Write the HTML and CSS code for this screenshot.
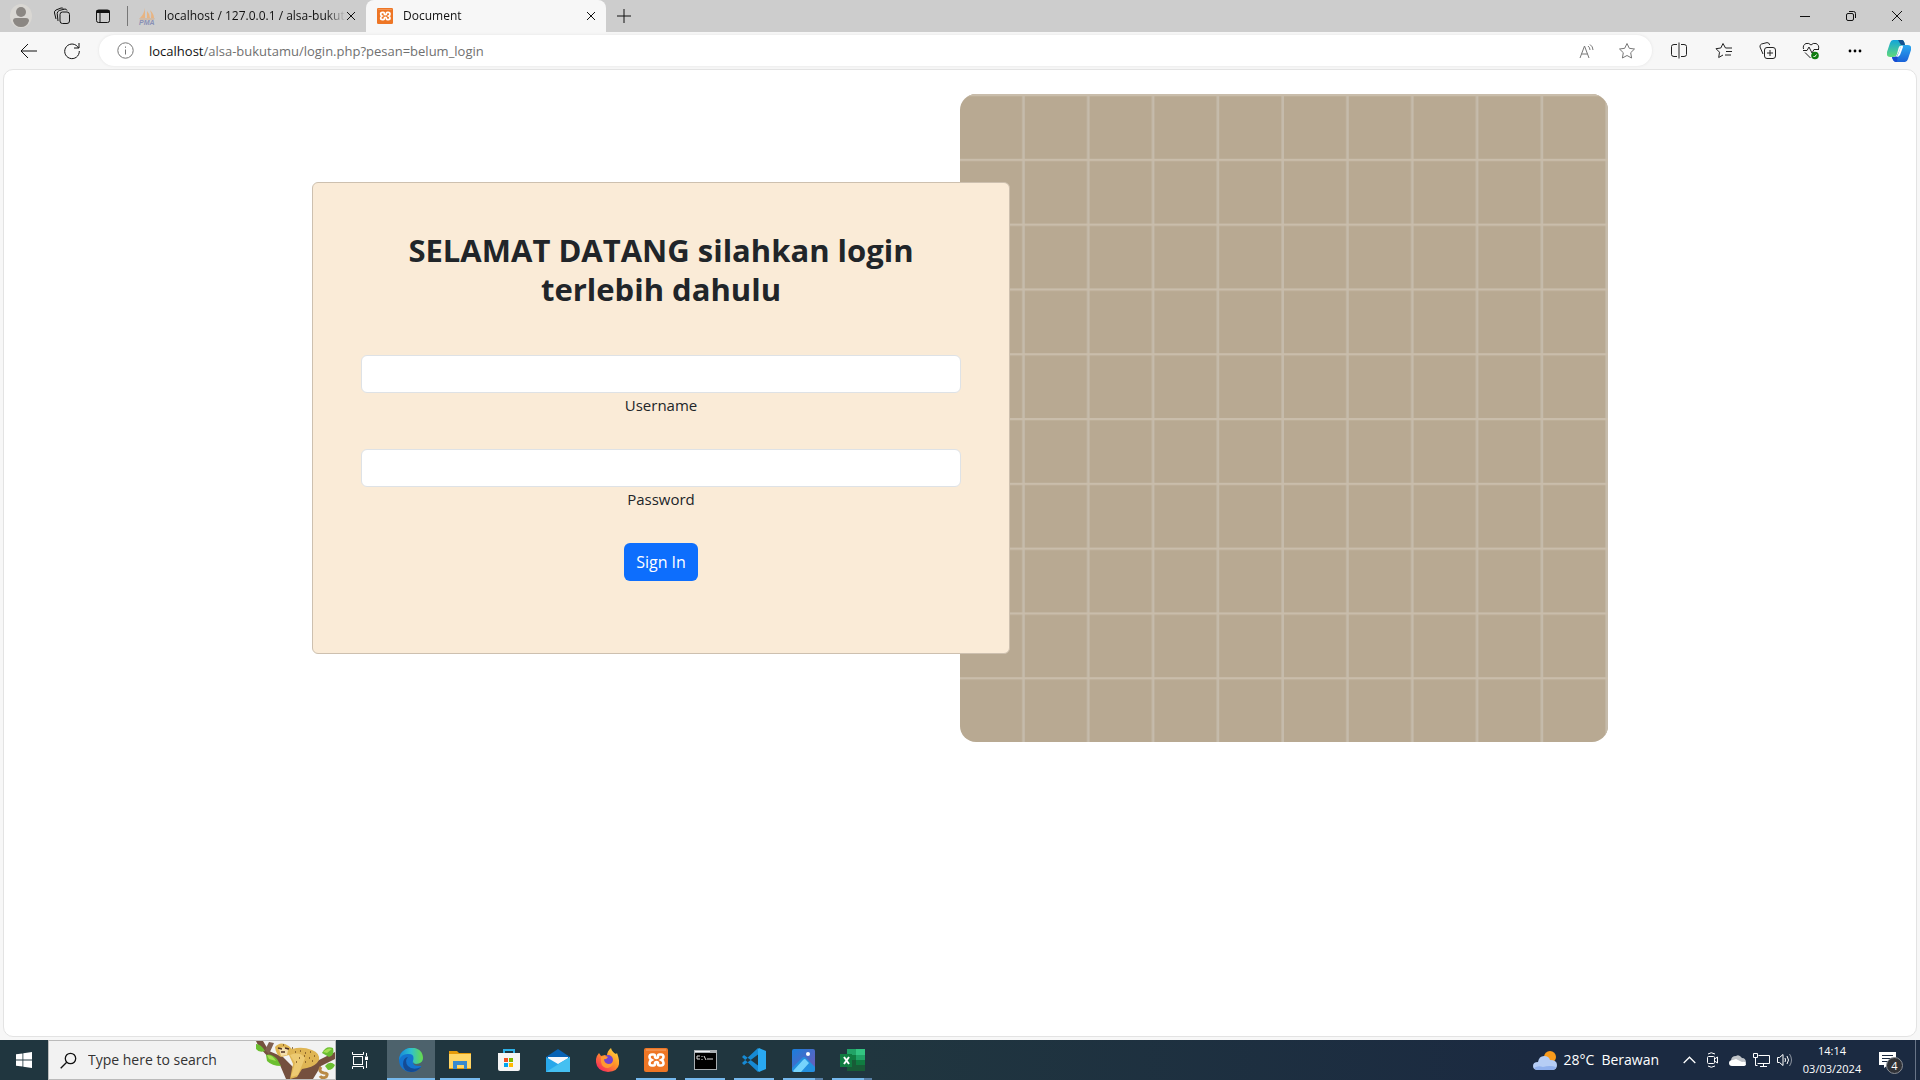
FILE: index.html
```html
<!DOCTYPE html>
<html lang="id">
<head>
<meta charset="utf-8">
<meta name="viewport" content="width=device-width, initial-scale=1">
<title>Document</title>
<link rel="stylesheet" href="styles.css">
</head>
<body>
<header class="browser">
  <div class="tabstrip">
    <div class="tab-tools">
      <button class="icon-btn" aria-label="Profile"><svg width="22" height="26" viewBox="0 0 22 26"><ellipse cx="11" cy="13" rx="11" ry="12" fill="#d9d7d3"/><circle cx="11" cy="9" r="5" fill="#8b8783"/><path d="M3 18q0-3 3-3h10q3 0 3 3-2 6-8 6t-8-6z" fill="#8b8783"/></svg></button>
      <button class="icon-btn" aria-label="Workspaces"><svg width="18" height="18" viewBox="0 0 18 18" class="line"><rect x="7" y="5" width="9.500" height="11.500" rx="2.500"/><path d="M5 14l-.8-7.500q0-2 2-3L12 2q1.500 0 2 1.500M3 12L1.500 6q-.5-2 1.500-3L8 1q1.500-.3 2.500.8"/></svg></button>
      <button class="icon-btn" aria-label="Tab actions"><svg width="16" height="16" viewBox="0 0 16 16" class="line"><rect x="1.500" y="2" width="13" height="12.500" rx="2"/><path d="M1.500 3.500h13" stroke-width="3"/><path d="M5 4v10"/></svg></button>
    </div>
    <div class="tab">
      <svg width="18" height="18" viewBox="0 0 18 18"><path d="M7 1v10H2Q6 7 7 1zM9 4q3 3 3 7H9zM12 3q4 4 4 8h-3q1-4-1-8z" fill="#e8b482"/><path d="M1 11.500h16l-1 1H2z" fill="#d6a982"/><text x="1" y="18" class="pma">PMA</text></svg>
      <span class="tab-title">localhost / 127.0.0.1 / alsa-bukut</span>
      <button class="close" aria-label="Close tab"><svg width="10" height="10" viewBox="0 0 10 10" class="line"><path d="M1 1l8 8M9 1L1 9"/></svg></button>
    </div>
    <div class="tab tab-active">
      <svg width="16" height="16" viewBox="0 0 24 24"><use href="#xampp"/></svg>
      <span class="tab-title">Document</span>
      <button class="close" aria-label="Close tab"><svg width="10" height="10" viewBox="0 0 10 10" class="line"><path d="M1 1l8 8M9 1L1 9"/></svg></button>
    </div>
    <button class="icon-btn new-tab" aria-label="New tab"><svg width="14" height="14" viewBox="0 0 14 14" class="line"><path d="M7 0v14M0 7h14"/></svg></button>
    <div class="window-controls">
      <button class="icon-btn" aria-label="Minimize"><svg width="10" height="10" viewBox="0 0 10 10" class="line"><path d="M0 5.500h10"/></svg></button>
      <button class="icon-btn" aria-label="Restore"><svg width="10" height="10" viewBox="0 0 10 10" class="line"><rect x=".5" y="2.500" width="7" height="7" rx="1.500"/><path d="M3 .5h4.500q2 0 2 2V7"/></svg></button>
      <button class="icon-btn" aria-label="Close"><svg width="12" height="12" viewBox="0 0 12 12" class="line"><path d="M1 1l10 10M11 1L1 11"/></svg></button>
    </div>
  </div>
  <div class="toolbar">
    <div class="nav">
      <button class="icon-btn" aria-label="Back"><svg width="17" height="16" viewBox="0 0 17 16" class="line"><path d="M8 1L1 8l7 7M1 8h16"/></svg></button>
      <button class="icon-btn" aria-label="Refresh"><svg width="18" height="18" viewBox="0 0 18 18" class="line"><path d="M15.500 6A7.300 7.300 0 1 0 16.300 9M16 1v5h-5"/></svg></button>
    </div>
    <div class="address">
      <button class="site-info" aria-label="Site information"><svg width="17" height="17" viewBox="0 0 17 17" class="line gray"><circle cx="8.500" cy="8.500" r="7.700"/><path d="M8.500 7.500v5M8.500 4.500v1.300"/></svg></button>
      <a class="url" href="#"><span class="host">localhost</span>/alsa-bukutamu/login.php?pesan=belum_login</a>
      <button class="icon-btn" aria-label="Read aloud"><svg width="17" height="16" viewBox="0 0 17 16" class="line gray"><path d="M1 15L5.500 3 10 15M2.500 11h6M9 3q2 1.500 2 4M11 1.500q3 2 3 5.500"/></svg></button>
      <button class="icon-btn" aria-label="Add to favorites"><svg width="18" height="18" viewBox="0 0 18 18" class="line gray"><path d="M9 1.500l2.300 4.800 5.200.7-3.800 3.700.9 5.300L9 13.500 4.400 16l.9-5.300L1.500 7l5.200-.7z"/></svg></button>
    </div>
    <div class="tools">
      <button class="icon-btn" aria-label="Split screen"><svg width="16" height="17" viewBox="0 0 16 17" class="line dark"><path d="M6 2.500H3q-2.500 0-2.500 2v8q0 2 2.500 2h3M10 2.500h3q2.500 0 2.500 2v8q0 2-2.500 2h-3M8 .5v16"/></svg></button>
      <button class="icon-btn" aria-label="Favorites"><svg width="17" height="17" viewBox="0 0 17 17" class="line dark"><path d="M10.500 6L8 1.500 5.800 6 1 6.700l3.500 3.500-.8 5.300L8 13M10.500 6H17M11 9.500h6M10 13h6"/></svg></button>
      <button class="icon-btn" aria-label="Collections"><svg width="17" height="17" viewBox="0 0 17 17" class="line dark"><rect x="5.500" y="5.500" width="11" height="11" rx="2.500"/><path d="M11 8v6M8 11h6M4 12L1 5q-.5-2 1.500-3L8 .6q2-.3 2.700 2.400"/></svg></button>
      <button class="icon-btn" aria-label="Browser essentials"><svg width="18" height="18" viewBox="0 0 18 18" class="line dark"><path d="M1.500 7Q.5 3 4 1.500q3-.8 5 1.500 2-2.300 5-1.500Q17.500 3 16.500 7M3 10.500L8.500 16M1 8.500h4L7 5l3 6 2-3.500h5"/><circle cx="13" cy="13.500" r="3.800" fill="#107c10" stroke="none"/><path d="M11.500 14l1 1 2-2.500" stroke="#fff"/></svg></button>
      <button class="icon-btn" aria-label="Settings and more"><svg width="14" height="4" viewBox="0 0 14 4"><circle cx="2" cy="2" r="1.400"/><circle cx="7" cy="2" r="1.400"/><circle cx="12" cy="2" r="1.400"/></svg></button>
      <button class="icon-btn copilot" aria-label="Copilot"><svg width="24" height="22" viewBox="0 0 24 22"><defs><linearGradient id="cp1" x2="0" y2="1"><stop stop-color="#12a5da"/><stop offset="1" stop-color="#61d97a"/></linearGradient><linearGradient id="cp2" x2="0" y2="1"><stop stop-color="#2aa9f0"/><stop offset="1" stop-color="#1a62d8"/></linearGradient></defs><path d="M6 0h9q2 0 3 5l-5 1q-1 0-2 4l-1 4q-1 3-4 3H3q-4 0-3-5L3 3q1-3 3-3z" fill="url(#cp1)"/><path d="M11 0h4q2 0 3 5h-4z" fill="#14518f"/><path d="M18 22H9q-3 0-4-5h2q3 0 4-3l2-5q1-4 4-4h4q4 0 3 5l-3 9q-1 3-3 3z" fill="url(#cp2)"/><path d="M5 17h2q3 0 4-3l-1 8q-4 0-5-5z" fill="#1849d2"/><path d="M14 6q2-1 2 1l-3 8q-1 2-4 2 2-1 3-5z" fill="#fff"/></svg></button>
    </div>
  </div>
</header>

<main class="viewport">
  <section class="login">
    <div class="card">
      <h2 class="heading">SELAMAT DATANG silahkan login terlebih dahulu</h2>
      <form class="form">
        <div class="field">
          <input class="control" type="text" id="username" name="username">
          <label for="username">Username</label>
        </div>
        <div class="field">
          <input class="control" type="password" id="password" name="password">
          <label for="password">Password</label>
        </div>
        <button class="submit" type="submit">Sign In</button>
      </form>
    </div>
    <svg class="tiles" viewBox="0 0 648 648" aria-hidden="true">
      <defs><pattern id="grid" width="64.800" height="64.800" patternUnits="userSpaceOnUse"><path d="M63.700 0v65" stroke="#c5bbab" stroke-width="3"/><path d="M0 1h65" stroke="#c9bdab" stroke-width="2.400"/></pattern></defs>
      <rect width="648" height="648" fill="#b8a992"/><rect width="648" height="648" fill="url(#grid)"/>
    </svg>
  </section>
</main>

<footer class="taskbar">
  <button class="start" aria-label="Start"><svg width="16" height="16" viewBox="0 0 16 16" fill="#fff"><path d="M0 2.300L6.500 1.400v6.200H0zM7.300 1.300L16 0v7.600H7.300zM0 8.400h6.500v6.200L0 13.700zM7.300 8.400H16V16l-8.700-1.300z"/></svg></button>
  <div class="search">
    <svg width="17" height="17" viewBox="0 0 17 17" class="line"><circle cx="10.500" cy="6.500" r="5.200" stroke-width="1.300"/><path d="M6.700 10.300L.7 16.300" stroke-width="1.300"/></svg>
    <input class="search-input" type="search" placeholder="Type here to search" aria-label="Type here to search">
    <svg class="leopard" width="79" height="38" viewBox="0 0 79 38">
      <path d="M0 0h7l6 10 14 6 14 14 8-6 12-4 18-9v7L65 25l-8 13H30l-6-14-10-6L3 6z" fill="#75503e"/>
      <path d="M13 1L9 9l4 4 5-11z" fill="#806050"/>
      <path d="M19 6q4-5 10-3 5 2 7 5 10-3 20 1 8 3 7 10-3 6-12 8l-5 1-5 8-7 2 3-15-4-9-8 2q-5-2-6-10z" fill="#dfb554"/>
      <path d="M34 14q10-4 15 3l-7 17-7 2 4-14z" fill="#edca72"/>
      <path d="M23 8q5-4 9 1l-1 5-6 1z" fill="#f4dfad"/><path d="M22 7l4 1M29 7l4 1M25 11h4" stroke="#4d3024" stroke-width="1.500"/>
      <path d="M39 11h1M44 10h1M49 12h1M54 11h1M58 15h1M53 17h1M48 15h1M43 17h1M40 21h1M49 21h1M56 20h1M36 7h1M27 4h1" stroke="#785220" stroke-width="1.500"/>
      <path d="M65 26q-3 5 3 6 5 0 2 4-4 2-6-1" fill="none" stroke="#b98946" stroke-width="3"/>
      <path d="M0 3q5 0 9 7-6 2-9-2zM10 14q5-2 11 4l4 7q-9 0-14-5zM66 12q4-8 11-5 2 7-4 9zM69 25q5-6 10-1-2 5-7 5z" fill="#6cbf31"/>
      <path d="M11 14q6 0 9 6l-7-2zM67 11q5-5 9-3l-5 4z" fill="#a7df55"/>
    </svg>
  </div>
  <button class="task-view" aria-label="Task view"><svg width="17" height="17" viewBox="0 0 17 17" class="line white"><rect x="1.500" y="4.500" width="9" height="8"/><path d="M.5 0v2.500h11V0M.5 17v-2.500h11V17M14.500 1v3M14.500 9v7"/><rect x="13.500" y="5" width="2" height="2.500" fill="#fff"/></svg></button>
  <nav class="apps" aria-label="Apps">
    <button class="app active" aria-label="Edge"><svg width="24" height="24" viewBox="0 0 24 24"><defs><linearGradient id="edge" x2="1"><stop stop-color="#1688d9"/><stop offset=".5" stop-color="#2fc1ce"/><stop offset="1" stop-color="#69dc47"/></linearGradient></defs><circle cx="12" cy="12" r="12" fill="#1474cf"/><path d="M0 12C1-4 24-4 24 10q0 6-7 6-4 0-3-3 2-7-4-7Q3 5 0 12z" fill="url(#edge)"/><path d="M9 9Q5 13 9 18q5 5 13 1-4 5-10 5Q4 23 4 16q0-6 5-7z" fill="#144b94"/><path d="M14 13q-1 5 6 5h4v-6q-2 4-7 4-3 0-3-3z" fill="#4d626c"/></svg></button>
    <button class="app running" aria-label="File Explorer"><svg width="22" height="20" viewBox="0 0 22 20"><path d="M0 1h8l2 2h12v16H0z" fill="#e69b0a"/><path d="M0 4h22v14H0z" fill="#ffd667"/><path d="M4 11h14v8h-3v-4H8v4H4z" fill="#3789cf"/></svg></button>
    <button class="app" aria-label="Microsoft Store"><svg width="24" height="24" viewBox="0 0 24 24"><path d="M7 7V2h10v5" fill="none" stroke="#2db1e8" stroke-width="2"/><path d="M1 5h22v16q0 2-2 2H3q-2 0-2-2z" fill="#f5f5f5"/><path d="M7 10h4v4H7z" fill="#f25022"/><path d="M12 10h4v4h-4z" fill="#7fba00"/><path d="M7 15h4v4H7z" fill="#00a4ef"/><path d="M12 15h4v4h-4z" fill="#ffb900"/></svg></button>
    <button class="app" aria-label="Mail"><svg width="24" height="23" viewBox="0 0 24 23"><path d="M0 8L12 0l12 8v10H0z" fill="#0863b5"/><path d="M2 8h20v9H2z" fill="#f7f8fb"/><path d="M0 8l12 7 12-7v15H0z" fill="#28a8ea"/><path d="M24 8L0 23h24z" fill="#45c0f1"/></svg></button>
    <button class="app" aria-label="Firefox"><svg width="23" height="24" viewBox="0 0 23 24"><defs><linearGradient id="ff" x1="1" x2=".2" y2="1"><stop stop-color="#ffe343"/><stop offset=".5" stop-color="#ff9428"/><stop offset="1" stop-color="#f6235e"/></linearGradient></defs><path d="M3 5l2 3 4-1 2 1q0-5 4-8 1 4 5 6l1-1q7 18-9 19Q-1 23 0 11q1-4 3-6z" fill="url(#ff)"/><circle cx="12" cy="12" r="5" fill="#7342cd"/><path d="M5 9q4-2 7 0-2 3-4 2 0 4 4 5 6 0 5-5 2 7-5 9-6 0-7-6z" fill="#ff9830"/></svg></button>
    <button class="app running" aria-label="XAMPP"><svg width="24" height="24" viewBox="0 0 24 24"><g id="xampp"><rect width="24" height="24" rx="2" fill="#ee7625"/><path d="M2 1.500h20v1H2z" fill="#f7a66f"/><path d="M8 6.500Q5.500 6.500 5.500 9 5.500 11 7.500 12 5.500 13 5.500 15q0 2.500 2.500 2.500h1.500q1.500 0 1.500-2 0-1.500 1.500-1.500t1.500 1.500q0 2 1.500 2H17q2.500 0 2.500-2.500 0-2-2-3 2-1 2-3 0-2.500-2.500-2.500h-1.500q-1.500 0-1.500 2 0 1.500-1.500 1.500T11 8.500q0-2-1.500-2z" fill="none" stroke="#fff" stroke-width="2.600"/></g></svg></button>
    <button class="app running" aria-label="Command Prompt"><svg width="23" height="20" viewBox="0 0 23 20"><path d="M0 0h23v20H0z" fill="#a9afb3"/><path d="M1 3h21v16H1z" fill="#000"/><path d="M1 1h15v1H1z" fill="#eef2f5"/><path d="M6 6H3v3h3M8 6v1M8 9v1M10 6l2 4M13 9h6" fill="none" stroke="#ddd"/></svg></button>
    <button class="app running" aria-label="Visual Studio Code"><svg width="24" height="24" viewBox="0 0 24 24"><path d="M2 7L0 9l16 15 2-5zM2 17l-2-2L16 0l2 5z" fill="#168ad4"/><path d="M17 0l7 3v18l-7 3-1-1V1z" fill="#29a9f2"/></svg></button>
    <button class="app running stacked" aria-label="Photos"><svg width="23" height="23" viewBox="0 0 23 23"><defs><linearGradient id="ph" x2="1" y2="1"><stop stop-color="#187edc"/><stop offset="1" stop-color="#7559b5"/></linearGradient></defs><rect width="23" height="23" rx="2" fill="url(#ph)"/><path d="M0 19l10-10q2-2 4 0l9 9v3q0 2-2 2H2q-2 0-2-2z" fill="#2390df"/><path d="M1 22l10-11q2-2 3 0l3 3-8 9H2z" fill="#75d4fc"/><circle cx="16" cy="5" r="2" fill="#fff"/></svg></button>
    <button class="app running stacked" aria-label="Excel"><svg width="25" height="22" viewBox="0 0 25 22"><path d="M7 0h18v22H7z" fill="#21a366"/><path d="M7 6h9v5H7zM16 11h9v5h-9z" fill="#107c41"/><path d="M16 0h9v6h-9z" fill="#33c481"/><path d="M7 11h9v11H7zM16 16h9v6h-9z" fill="#185c37"/><path d="M0 5h12v13H0z" fill="#107c41"/><path d="M4 8l5 7M9 8l-5 7" stroke="#fff" stroke-width="2"/></svg></button>
  </nav>
  <div class="tray">
    <button class="weather"><svg width="24" height="21" viewBox="0 0 24 21"><circle cx="17" cy="7" r="6" fill="#f99b1c"/><path d="M5 20q-5 0-5-4t5-4q1-6 6-6 5 0 6 4 7 0 7 5t-5 5z" fill="#b5cdf5"/><path d="M1 18q4-3 9-1 7-2 13 0-1 3-4 3H5q-3 0-4-2z" fill="#8fb0ed"/></svg><span>28°C</span><span>Berawan</span></button>
    <div class="status">
      <button aria-label="Show hidden icons"><svg width="13" height="8" viewBox="0 0 13 8" class="line white"><path d="M.7 7L6.500 1.200 12.300 7" stroke-width="1.300"/></svg></button>
      <button aria-label="Meet Now"><svg width="14" height="16" viewBox="0 0 14 16" class="line white"><rect x="1.500" y="4.500" width="7" height="7" rx="1"/><path d="M8.500 7l3-2v6l-3-2M2 2Q5-.5 9 2M2 14q3 2.500 7 0"/></svg></button>
      <button aria-label="OneDrive"><svg width="17" height="11" viewBox="0 0 17 11"><path d="M2 6q0-5 5-5 3-2 6 2 4 0 4 5z" fill="#bfc3c8"/><path d="M3 11q-3 0-3-3t4-3l3-1 6 3q4-1 4 2 0 2-3 2z" fill="#fff"/></svg></button>
      <button aria-label="Network"><svg width="17" height="15" viewBox="0 0 17 15" class="line white"><path d="M5.500 2.500h11v8h-12M10.500 10.500v3M7 13.500h7M.5.500h4v4h-4zM2.500 4.500v8h2"/></svg></button>
      <button aria-label="Volume"><svg width="16" height="14" viewBox="0 0 16 14" class="line white"><path d="M.5 4.500h2L6 1.500v11l-3.500-3h-2zM8 5q1 2 0 4M10 3q3 4 0 8"/><path d="M12.500 1q4 6 0 12" opacity=".5"/></svg></button>
    </div>
    <button class="clock"><time>14:14</time><span>03/03/2024</span></button>
    <button class="notifications" aria-label="4 notifications"><svg width="17" height="16" viewBox="0 0 17 16"><path d="M0 0h17v13H9l-4 3v-3H0z" fill="#fff"/><path d="M3 3.500h11M3 6.500h11M3 9.500h7" stroke="#1b2a41"/></svg><span class="count">4</span></button>
    <span class="show-desktop"></span>
  </div>
</footer>
</body>
</html>
```
FILE: styles.css
```css
* { box-sizing: border-box; }

body {
  margin: 0;
  min-height: 100vh;
  display: flex;
  flex-direction: column;
  background: #f7f7f7;
  color: #212529;
  font-family: "Open Sans", "Noto Sans", sans-serif;
  font-size: 15px;
  line-height: 24px;
}

button {
  border: 0;
  padding: 0;
  background: none;
  color: inherit;
  font: inherit;
}

svg { display: block; flex: none; }

.line { fill: none; stroke: #111; }
.gray { stroke: #777; }
.dark { stroke: #222; }
.white { stroke: #fff; }

.icon-btn {
  display: flex;
  align-items: center;
  justify-content: center;
}

/* Tab strip */
.tabstrip {
  display: flex;
  height: 32px;
  background: #cdcdcd;
  font-size: 12px;
  color: #111;
}

.tab-tools {
  display: flex;
  align-items: center;
  width: 128px;
  height: 20px;
  margin: 6px 0;
  border-right: 1px solid #777;
}
.tab-tools .icon-btn { width: 41px; }

.tab {
  display: flex;
  align-items: center;
  gap: 8px;
  width: 238px;
  padding: 0 10px;
}
.tab-active {
  gap: 10px;
  width: 240px;
  padding-left: 11px;
  background: #f7f7f7;
  border-radius: 8px 8px 0 0;
}
.tab-title {
  flex: 1;
  white-space: nowrap;
  -webkit-mask-image: linear-gradient(to left, transparent, #000 20px);
  mask-image: linear-gradient(to left, transparent, #000 20px);
}
.close { margin-left: -8px; }
.pma { font: italic bold 7px "Liberation Sans", sans-serif; fill: #8990b5; }
.new-tab { width: 35px; }
.window-controls { display: flex; margin-left: auto; }
.window-controls .icon-btn { width: 46px; }

/* Toolbar */
.toolbar {
  display: flex;
  align-items: center;
  height: 37px;
}
.nav { display: flex; padding-left: 6px; width: 99px; }
.nav .icon-btn { width: 44px; }
.address {
  flex: 1;
  display: flex;
  align-items: center;
  height: 31px;
  padding: 0 5px 0 18px;
  border-radius: 16px;
  background: #fff;
  box-shadow: 0 0 3px #e2e2e2;
  font-size: 13px;
}
.address .icon-btn { width: 40px; }
.url { flex: 1; margin-left: 15px; color: #707070; text-decoration: none; }
.host { color: #111; }
.tools { display: flex; padding-left: 5px; }
.tools .icon-btn { width: 44px; }
.tools .copilot { width: 43px; }

/* Page */
.viewport {
  flex: 1;
  margin: 0 3px 3px;
  padding: 24px 12px;
  background: #fff;
  border: 1px solid #e3e3e3;
  border-radius: 10px;
}
.login {
  display: grid;
  grid-template-columns: 1fr 1fr;
  align-items: center;
  max-width: 1296px;
  margin: 0 auto;
}
.card {
  position: relative;
  margin-right: -50px;
  padding: 48px;
  border: 1px solid #cdc0af;
  border-radius: 6px;
  background: #faebd7;
  text-align: center;
}
.heading {
  margin: 0 0 46px;
  font-size: 31px;
  line-height: 39px;
  font-weight: 700;
}
.form { margin-bottom: 24px; }
.field { margin-bottom: 32px; }
.control {
  display: block;
  width: 100%;
  height: 38px;
  padding: 6px 12px;
  border: 1px solid #dee2e6;
  border-radius: 6px;
  background: #fff;
  font: inherit;
}
.field label { display: block; }
.submit {
  height: 38px;
  padding: 0 12px;
  border-radius: 6px;
  background: #0d6efd;
  color: #fff;
  font-size: 16px;
}
.tiles { width: 100%; height: auto; border-radius: 16px; }

/* Taskbar */
.taskbar {
  display: flex;
  height: 40px;
  background: linear-gradient(90deg, #20363f 45%, #1b2a41 80%);
  color: #fff;
}
.start, .task-view {
  display: flex;
  align-items: center;
  justify-content: center;
  width: 48px;
}
.search {
  display: flex;
  align-items: center;
  width: 288px;
  padding-left: 11px;
  border: 1px solid #bbb;
  background: #f2f2f2;
}
.search-input {
  flex: 1;
  min-width: 0;
  padding: 0 0 0 11px;
  border: 0;
  background: none;
  font: inherit;
  font-size: 14px;
}
.search-input::placeholder { color: #333; opacity: 1; }
.apps { display: flex; gap: 1px; margin-left: 3px; }
.app {
  display: flex;
  align-items: center;
  justify-content: center;
  width: 48px;
}
.running {
  background: linear-gradient(#76b9ed, #76b9ed) center bottom / 40px 2px no-repeat;
}
.stacked {
  background-image: linear-gradient(90deg, #76b9ed 32px, #587fa5 32px);
}
.active { background: #4d626c; border-bottom: 2px solid #76b9ed; padding-top: 2px; }

.tray { display: flex; align-items: center; margin-left: auto; }
.weather { display: flex; align-items: center; gap: 7px; font-size: 14px; }
.status { display: flex; margin-left: 18px; }
.status button {
  display: flex;
  align-items: center;
  justify-content: center;
  width: 24px;
  height: 24px;
}
.clock {
  display: flex;
  flex-direction: column;
  align-items: center;
  width: 70px;
  font-size: 11px;
  line-height: 18px;
}
.notifications { position: relative; width: 48px; padding-left: 12px; }
.count {
  position: absolute;
  left: 19px;
  top: 5px;
  width: 17px;
  height: 17px;
  border: 1px solid #8b8f96;
  border-radius: 50%;
  background: #303237;
  font-size: 11px;
  line-height: 15px;
}
.show-desktop { width: 5px; height: 40px; border-left: 1px solid #687487; }
```
